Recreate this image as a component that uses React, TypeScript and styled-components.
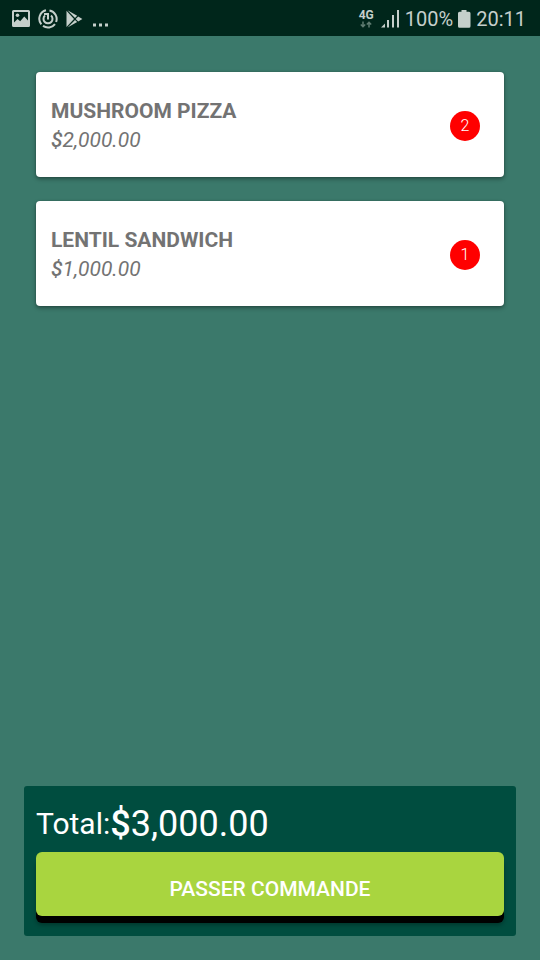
import React from "react";
import styled, { createGlobalStyle } from "styled-components";

const GlobalStyle = createGlobalStyle`
  * { box-sizing: border-box; }
  body {
    margin: 0;
    background: #3b796b;
    font-family: Roboto, "Liberation Sans", sans-serif;
  }
`;

const Screen = styled.div`
  display: flex;
  flex-direction: column;
  min-height: 100vh;
  background: #3b796b;
`;

const StatusBar = styled.header`
  display: flex;
  align-items: center;
  justify-content: space-between;
  height: 36px;
  padding: 2px 14px 0 12px;
  background: #00261b;
  color: #c5cfcb;
`;

const StatusGroup = styled.div<{ $gap: number }>`
  display: flex;
  align-items: center;
  gap: ${(p) => p.$gap}px;
  svg { display: block; }
`;

const StatusText = styled.span`
  font-size: 20px;
  line-height: 24px;
`;

const Network = styled.span`
  display: flex;
  flex-direction: column;
  align-items: center;
  margin-right: 2px;
  font-size: 12px;
  line-height: 11px;
  font-weight: 700;
`;

const OrderList = styled.ul`
  flex: 1;
  display: flex;
  flex-direction: column;
  gap: 24px;
  margin: 0;
  padding: 36px;
  list-style: none;
`;

const OrderCard = styled.li`
  display: flex;
  align-items: center;
  justify-content: space-between;
  padding: 24px 24px 22px 15px;
  border-radius: 4px;
  background: #fff;
  color: #737373;
  box-shadow: 0 2px 4px rgba(0, 0, 0, 0.36), 0 0 2px rgba(0, 0, 0, 0.2);
`;

const ItemText = styled.div`
  padding-top: 1px;
`;

const ItemName = styled.h2`
  margin: 0;
  font-size: 21px;
  line-height: 28px;
  font-weight: 700;
  text-transform: uppercase;
`;

const ItemPrice = styled.p`
  margin: 0;
  font-size: 21px;
  line-height: 30px;
  font-style: italic;
`;

const Currency = styled.span`
  font-weight: 500;
`;

const Quantity = styled.span`
  display: grid;
  place-items: center;
  width: 30px;
  height: 30px;
  border-radius: 50%;
  background: #ff0000;
  color: #fff;
  font-size: 16px;
  line-height: 30px;
  font-weight: 300;
`;

const Checkout = styled.footer`
  margin: 0 24px 24px;
  padding: 16px 12px 12px;
  border-radius: 3px;
  background: #004d3f;
`;

const Total = styled.p`
  display: flex;
  align-items: center;
  margin: 0 0 6px;
  color: #fff;
  font-size: 30px;
  line-height: 44px;
`;

const Amount = styled.span`
  font-size: 36px;
`;

const OrderButton = styled.button`
  display: block;
  width: 100%;
  height: 64px;
  margin: 0 0 8px;
  padding: 10px 0 0;
  border: 0;
  border-radius: 6px;
  background: #a9d53f;
  color: #fff;
  font-family: inherit;
  font-size: 21px;
  line-height: 28px;
  font-weight: 500;
  text-transform: uppercase;
  cursor: pointer;
  box-shadow: 0 7px 0 #000, 0 9px 4px rgba(0, 0, 0, 0.3);
`;

const PictureIcon = () => (
  <svg width="18" height="18" viewBox="0 0 18 18" aria-hidden="true">
    <path
      fill="currentColor"
      fillRule="evenodd"
      d="M1.500 0h15A1.500 1.500 0 0 1 18 1.500v14a1.500 1.500 0 0 1-1.500 1.500h-15A1.500 1.500 0 0 1 0 15.500v-14A1.500 1.500 0 0 1 1.500 0ZM2 2v10.500l3.500-3.500 2.700 2.300L12.300 6.500 16 10.500V2Z"
    />
    <circle cx="5.500" cy="5.300" r="1.800" fill="currentColor" />
  </svg>
);

const SyncIcon = () => (
  <svg width="20" height="20" viewBox="0 0 20 20" fill="none" stroke="currentColor" aria-hidden="true">
    <path strokeWidth="2" d="M8 1.300A8.700 8.700 0 0 0 3.300 15.300M5 16.900A8.700 8.700 0 0 0 17 15.100M18.100 13A8.700 8.700 0 0 0 11.500 1.400" />
    <path strokeWidth="2" d="M13 6.500a4.500 4.500 0 1 1-6 0" />
    <path strokeWidth="2" d="M10 10.500V5H6" />
  </svg>
);

const PlayStoreIcon = () => (
  <svg width="17" height="18" viewBox="0 0 17 18" fill="currentColor" aria-hidden="true">
    <path d="M.500.800v16.200L8 9ZM1.500.200 9 8l2.200-2.200ZM1.500 17.600 9 10l2.200 2ZM12.200 6.400 9.700 9l2.500 2.500L16.400 9Z" />
  </svg>
);

const MoreIcon = () => (
  <svg width="19" height="18" viewBox="0 0 19 18" fill="currentColor" aria-hidden="true">
    <path d="M2 13.500h3v3h-3ZM8 13.500h3v3h-3ZM14 13.500h3v3h-3Z" />
  </svg>
);

const DataArrowsIcon = () => (
  <svg width="12" height="7" viewBox="0 0 12 7" fill="none" stroke="#5f7c72" strokeWidth="1.500" aria-hidden="true">
    <path d="M3 .500v5M.800 3.500 3 5.700l2.200-2.200M9 6.500v-5M6.800 3.500 9 1.300l2.200 2.200" />
  </svg>
);

const SignalIcon = () => (
  <svg width="19" height="18" viewBox="0 0 19 18" fill="currentColor" aria-hidden="true">
    <path d="M0 17.500 4 13.500v4ZM6 10h2v7.500H6ZM11 5h2v12.500h-2ZM16 0h2v17.500h-2Z" />
  </svg>
);

const BatteryIcon = () => (
  <svg width="13" height="18" viewBox="0 0 13 18" fill="currentColor" aria-hidden="true">
    <path d="M3.500 0h5v1.800h2.500a1.500 1.500 0 0 1 1.500 1.500v13a1.500 1.500 0 0 1-1.500 1.500H1.500A1.500 1.500 0 0 1 0 16.300v-13a1.500 1.500 0 0 1 1.500-1.500h2Z" />
  </svg>
);

const orders = [
  { name: "Mushroom Pizza", price: "2,000.00", quantity: 2 },
  { name: "Lentil Sandwich", price: "1,000.00", quantity: 1 },
];

export default function App() {
  return (
    <Screen>
      <GlobalStyle />
      <StatusBar>
        <StatusGroup $gap={8}>
          <PictureIcon />
          <SyncIcon />
          <PlayStoreIcon />
          <MoreIcon />
        </StatusGroup>
        <StatusGroup $gap={5}>
          <Network>
            4G
            <DataArrowsIcon />
          </Network>
          <SignalIcon />
          <StatusText>100%</StatusText>
          <BatteryIcon />
          <StatusText>20:11</StatusText>
        </StatusGroup>
      </StatusBar>
      <OrderList>
        {orders.map((order) => (
          <OrderCard key={order.name}>
            <ItemText>
              <ItemName>{order.name}</ItemName>
              <ItemPrice>
                <Currency>$</Currency>
                {order.price}
              </ItemPrice>
            </ItemText>
            <Quantity>{order.quantity}</Quantity>
          </OrderCard>
        ))}
      </OrderList>
      <Checkout>
        <Total>
          Total:
          <Amount>
            <Currency>$</Currency>3,000.00
          </Amount>
        </Total>
        <OrderButton type="button">Passer commande</OrderButton>
      </Checkout>
    </Screen>
  );
}
